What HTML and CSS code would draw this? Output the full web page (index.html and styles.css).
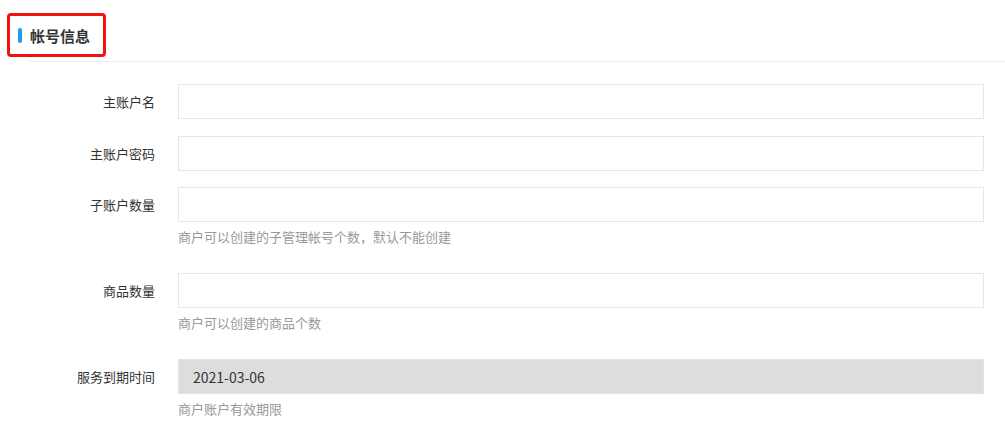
FILE: index.html
```html
<!DOCTYPE html>
<html lang="zh-CN">
<head>
  <meta charset="UTF-8">
  <title>帐号信息</title>
  <link rel="stylesheet" href="styles.css">
</head>
<body>
  <div class="section-head">
    <div class="title-box">
      <span class="title-bar"></span>
      <span class="title-text">帐号信息</span>
    </div>
  </div>
  <div class="divider"></div>

  <form class="form">
    <div class="form-row">
      <label class="form-label">主账户名</label>
      <div class="form-field">
        <input class="form-input" type="text">
      </div>
    </div>

    <div class="form-row">
      <label class="form-label">主账户密码</label>
      <div class="form-field">
        <input class="form-input" type="password">
      </div>
    </div>

    <div class="form-row">
      <label class="form-label">子账户数量</label>
      <div class="form-field">
        <input class="form-input" type="text">
        <div class="form-help">商户可以创建的子管理帐号个数，默认不能创建</div>
      </div>
    </div>

    <div class="form-row">
      <label class="form-label">商品数量</label>
      <div class="form-field">
        <input class="form-input" type="text">
        <div class="form-help">商户可以创建的商品个数</div>
      </div>
    </div>

    <div class="form-row">
      <label class="form-label">服务到期时间</label>
      <div class="form-field">
        <input class="form-input disabled" type="text" value="2021-03-06" disabled>
        <div class="form-help">商户账户有效期限</div>
      </div>
    </div>
  </form>
</body>
</html>
```

FILE: styles.css
```css
body {
  margin: 0;
  background-color: #fff;
  color: #333;
  font-family: "Noto Sans CJK SC", "Microsoft YaHei", sans-serif;
  font-size: 13px;
}

.section-head {
  padding: 13px 0 4px 7px;
}

.title-box {
  box-sizing: border-box;
  width: 99px;
  height: 44px;
  border: 3px solid #f0140e;
  border-radius: 4px;
  display: flex;
  align-items: center;
  padding-left: 8px;
}

.title-bar {
  width: 4px;
  height: 15px;
  border-radius: 2px;
  background-color: #1c9cf6;
}

.title-text {
  margin-left: 8px;
  font-size: 15px;
  font-weight: bold;
  color: #333;
}

.divider {
  margin-left: 29px;
  border-top: 1px solid #ececec;
}

.form {
  padding-top: 22px;
}

.form-row {
  display: flex;
  align-items: flex-start;
  margin-bottom: 16.5px;
}

.form-label {
  box-sizing: border-box;
  width: 178px;
  padding-right: 23px;
  text-align: right;
  line-height: 35px;
  color: #333;
}

.form-field {
  width: 806px;
}

.form-input {
  box-sizing: border-box;
  display: block;
  width: 100%;
  height: 35px;
  margin: 0;
  padding: 0 14px;
  border: 1px solid #e6e6e6;
  background-color: #fff;
  font-family: "Noto Sans CJK SC", "Microsoft YaHei", sans-serif;
  font-size: 14px;
  color: #333;
  outline: none;
}

.form-input.disabled {
  background-color: #dddddd;
  border-color: #e3e3e3;
  color: #333;
}

.form-help {
  margin: 5px 0 9.5px;
  line-height: 20px;
  color: #999;
}
```
